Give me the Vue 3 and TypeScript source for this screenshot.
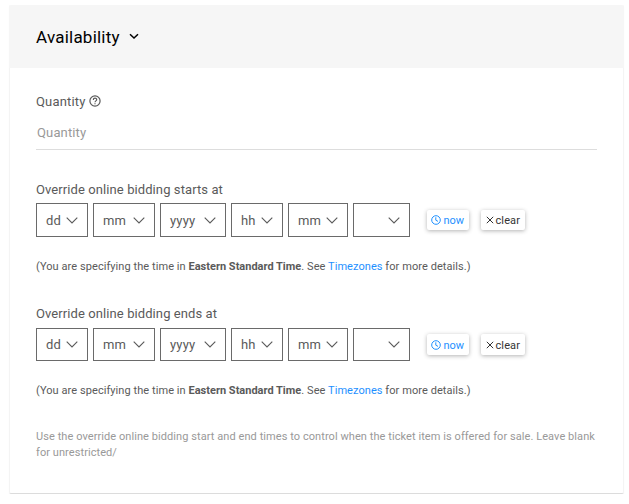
<script setup lang="ts">
interface Part {
  text: string
  width: number
}

const parts: Part[] = [
  { text: 'dd', width: 52 },
  { text: 'mm', width: 62 },
  { text: 'yyyy', width: 66 },
  { text: 'hh', width: 52 },
  { text: 'mm', width: 60 },
  { text: '', width: 57 },
]

const groups: string[] = ['Override online bidding starts at', 'Override online bidding ends at']
</script>

<template>
  <section class="card">
    <header class="head">
      <h2>Availability</h2>
      <svg class="caret" viewBox="0 0 10 7" width="10" height="7"><path d="M1 1.2 5 5 9 1.2" /></svg>
    </header>
    <div class="body">
      <div class="label quantity">
        <span>Quantity</span>
        <svg class="help" viewBox="0 0 12 12" width="12" height="12">
          <circle cx="6" cy="6" r="5.1" />
          <path d="M4.3 4.9C4.3 2.6 7.7 2.6 7.7 4.7C7.7 5.9 6 5.9 6 7.3M6 8.3V9.3" />
        </svg>
      </div>
      <div class="field">Quantity</div>

      <div v-for="group in groups" :key="group" class="group">
        <div class="label">{{ group }}</div>
        <div class="row">
          <div v-for="(part, i) in parts" :key="i" class="select" :style="{ width: part.width + 'px' }">
            <span>{{ part.text }}</span>
            <svg viewBox="0 0 12 7" width="12" height="7"><path d="M.7.7 6 6 11.3.7" /></svg>
          </div>
          <button class="btn now" type="button">
            <svg viewBox="0 0 10 10" width="10" height="10">
              <circle cx="5" cy="5" r="4.3" />
              <path d="M4.8 2.3V5.2L7 6.4" />
            </svg>
            <span>now</span>
          </button>
          <button class="btn clear" type="button">
            <svg viewBox="0 0 8 8" width="8" height="8"><path d="M.8.8 7.2 7.2M7.2.8.8 7.2" /></svg>
            <span>clear</span>
          </button>
        </div>
        <p class="note">
          (You are specifying the time in <b>Eastern Standard Time</b>. See <a>Timezones</a> for more details.)
        </p>
      </div>

      <p class="hint">
        Use the override online bidding start and end times to control when the ticket item is offered for sale. Leave blank for unrestricted/
      </p>
    </div>
  </section>
</template>

<style>
body {
  background: #fff;
}
</style>

<style scoped>
.card {
  box-sizing: border-box;
  width: 615px;
  height: 489px;
  margin: 5px 0 0 9px;
  border: 1px solid #f4f4f4;
  border-top: 0;
  border-bottom-color: #dcdcdc;
  border-radius: 2px;
  box-shadow: 0 1px 1px rgba(0, 0, 0, 0.06);
  font-family: Roboto, sans-serif;
  color: #5a5a5a;
}
.head {
  display: flex;
  align-items: center;
  height: 63px;
  margin: 0 -1px;
  padding-left: 27px;
  background: #f6f6f6;
  border-radius: 2px 2px 0 0;
  color: #000;
}
h2 {
  margin: 0;
  font-size: 17px;
  font-weight: 400;
  line-height: 20px;
  letter-spacing: 0.22px;
}
svg {
  display: block;
  flex: none;
  fill: none;
  stroke: currentColor;
}
.caret {
  margin-left: 9px;
  stroke-width: 1.5;
}
.body {
  padding: 26px 26px 0;
}
.label {
  font-size: 13px;
  line-height: 16px;
  letter-spacing: 0.09px;
  white-space: nowrap;
}
.quantity {
  display: flex;
  align-items: center;
  letter-spacing: 0.16px;
}
.help {
  margin: -2px 0 0 3.4px;
  stroke-width: 1.2;
}
.field {
  box-sizing: border-box;
  height: 40px;
  padding: 15px 1px 0;
  border-bottom: 1px solid #ddd;
  color: #999;
  font-size: 13px;
  line-height: 16px;
  letter-spacing: 0.14px;
}
.group {
  height: 124px;
}
.group + .group {
  height: 123px;
}
.field + .group {
  margin-top: 32px;
}
.row {
  display: flex;
  align-items: center;
  gap: 5px;
  height: 34px;
  margin-top: 5px;
}
.group + .group .row {
  margin-top: 6px;
}
.group + .group .note {
  margin-top: 21px;
}
.select {
  box-sizing: border-box;
  display: flex;
  align-items: center;
  justify-content: space-between;
  height: 34px;
  padding: 0 9px;
  border: 1px solid #6a6a6a;
  font-size: 13px;
  letter-spacing: 0.2px;
}
.group + .group .select {
  height: 33px;
  margin-bottom: 1px;
}
.select svg {
  stroke-width: 1.1;
}
.btn {
  display: flex;
  align-items: center;
  height: 20px;
  padding: 0 4px;
  border: 0;
  border-radius: 2px;
  background: #fff;
  box-shadow: 0 1px 4px rgba(0, 0, 0, 0.3);
  font-family: inherit;
  font-size: 11px;
  line-height: 21px;
}
.group + .group .btn {
  height: 21px;
  margin-bottom: 1px;
}
.btn span {
  padding-top: 1px;
}
.now {
  width: 42px;
  margin-left: 12px;
  gap: 2.4px;
  color: #1e90ff;
}
.clear {
  width: 44px;
  margin-left: 7px;
  padding-left: 4.5px;
  gap: 2px;
  letter-spacing: 0.1px;
  color: #333;
}
.note {
  margin: 22px 0 0;
  font-size: 11px;
  line-height: 16px;
  letter-spacing: 0.068px;
  white-space: nowrap;
}
b {
  font-weight: 700;
  letter-spacing: 0;
}
a {
  color: #1e90ff;
}
.hint {
  margin: 0;
  color: #999;
  font-size: 11px;
  line-height: 16px;
  letter-spacing: 0.07px;
}
</style>
